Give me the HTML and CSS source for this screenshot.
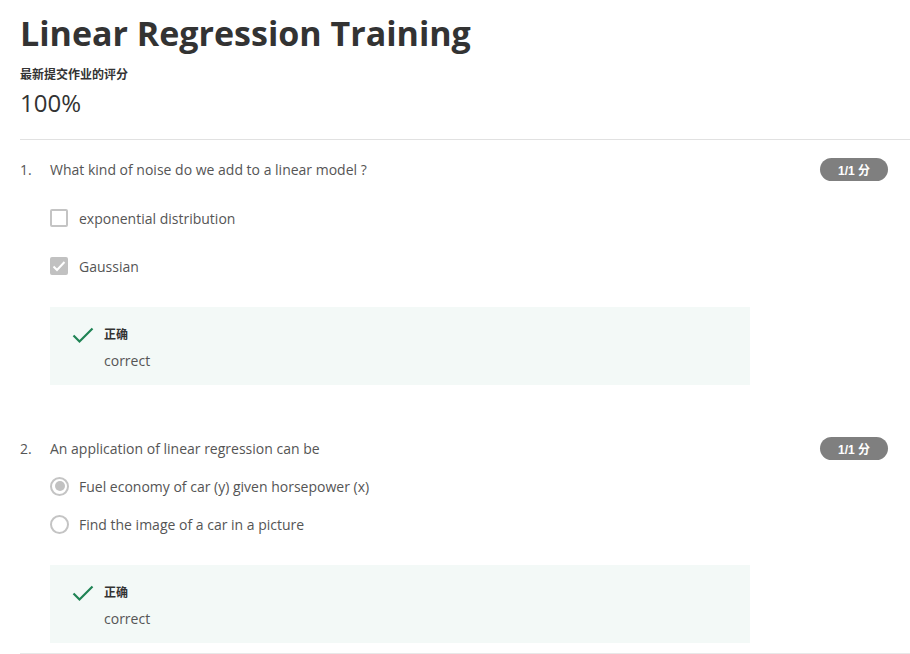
FILE: index.html
```html
<!DOCTYPE html>
<html>
<head>
<meta charset="utf-8">
<link rel="stylesheet" href="styles.css">
</head>
<body>
<div class="page">
  <header class="head">
    <h1 class="title">Linear Regression Training</h1>
    <div class="grade-label">最新提交作业的评分</div>
    <div class="grade">100%</div>
  </header>

  <section class="question">
    <div class="q-row">
      <span class="q-num">1.</span>
      <span class="q-text">What kind of noise do we add to a linear model ?</span>
      <span class="badge">1/1 分</span>
    </div>
    <div class="options checks">
      <div class="opt"><span class="box"></span><span>exponential distribution</span></div>
      <div class="opt"><span class="box on"><svg width="14" height="12" viewBox="0 0 14 12"><path d="M1.5 6.5 L5 10 L12.5 2" fill="none" stroke="#fff" stroke-width="2"/></svg></span><span>Gaussian</span></div>
    </div>
    <div class="feedback">
      <svg class="tick" width="22" height="17" viewBox="0 0 22 17"><path d="M1.5 8.5 L7.5 14.5 L20.5 1.5" fill="none" stroke="#1f8354" stroke-width="2.2"/></svg>
      <div class="fb-body">
        <div class="fb-title">正确</div>
        <div class="fb-text">correct</div>
      </div>
    </div>
  </section>

  <section class="question q2">
    <div class="q-row">
      <span class="q-num">2.</span>
      <span class="q-text">An application of linear regression can be</span>
      <span class="badge">1/1 分</span>
    </div>
    <div class="options radios">
      <div class="opt"><span class="radio on"></span><span>Fuel economy of car (y) given horsepower (x)</span></div>
      <div class="opt"><span class="radio"></span><span>Find the image of a car in a picture</span></div>
    </div>
    <div class="feedback">
      <svg class="tick" width="22" height="17" viewBox="0 0 22 17"><path d="M1.5 8.5 L7.5 14.5 L20.5 1.5" fill="none" stroke="#1f8354" stroke-width="2.2"/></svg>
      <div class="fb-body">
        <div class="fb-title">正确</div>
        <div class="fb-text">correct</div>
      </div>
    </div>
  </section>
</div>
</body>
</html>
```

FILE: styles.css
```css
html, body {
  margin: 0;
  padding: 0;
  background: #fff;
}
body {
  font-family: "Open Sans", "Noto Sans CJK SC", sans-serif;
  color: #555;
}
.page {
  padding-left: 20px;
}
.head {
  padding-top: 10px;
  border-bottom: 1px solid #e1e1e1;
  padding-bottom: 20px;
}
.title {
  margin: 0;
  font-size: 34px;
  line-height: 46px;
  font-weight: 700;
  color: #333;
}
.grade-label {
  margin-top: 10px;
  font-size: 12px;
  line-height: 18px;
  font-weight: 700;
  color: #333;
}
.grade {
  margin-top: 3px;
  font-size: 24px;
  line-height: 32px;
  font-weight: 400;
  color: #333;
}
.question {
  padding-top: 17px;
}
.q2 {
  padding-top: 51px;
  border-bottom: 1px solid #e8e8e8;
  padding-bottom: 10px;
}
.q-row {
  display: flex;
  align-items: center;
  height: 24px;
  font-size: 14px;
  padding-right: 22px;
}
.q-num {
  width: 30px;
  flex: none;
}
.q-text {
  flex: 1;
}
.badge {
  flex: none;
  width: 68px;
  height: 23px;
  border-radius: 12px;
  background: #7f7f7f;
  color: #fff;
  font-family: "Liberation Sans", "Noto Sans CJK SC", sans-serif;
  font-size: 12px;
  font-weight: 700;
  display: flex;
  align-items: center;
  justify-content: center;
}
.options {
  padding-left: 30px;
  display: flex;
  flex-direction: column;
  font-size: 14px;
}
.checks {
  margin-top: 27px;
  gap: 28px;
}
.checks .opt {
  gap: 11px;
}
.radios {
  margin-top: 16px;
  gap: 18px;
}
.opt {
  display: flex;
  align-items: center;
  height: 20px;
  gap: 10px;
}
.box {
  width: 18px;
  height: 18px;
  box-sizing: border-box;
  border: 2px solid #c4c4c4;
  border-radius: 2px;
  display: flex;
  align-items: center;
  justify-content: center;
}
.box.on {
  background: #c1c1c1;
  border-color: #c1c1c1;
}
.radio {
  width: 19px;
  height: 19px;
  box-sizing: border-box;
  border: 2px solid #c4c4c4;
  border-radius: 50%;
  display: flex;
  align-items: center;
  justify-content: center;
}
.radio.on::after {
  content: "";
  width: 10px;
  height: 10px;
  border-radius: 50%;
  background: #c1c1c1;
}
.feedback {
  margin-top: 31px;
  margin-left: 30px;
  width: 700px;
  background: #f3f9f7;
  box-sizing: border-box;
  padding: 19px 0 14px 22px;
  display: flex;
  gap: 10px;
}
.tick {
  flex: none;
  margin-top: 1px;
}
.fb-title {
  font-size: 12px;
  line-height: 18px;
  font-weight: 700;
  color: #333;
}
.fb-text {
  margin-top: 7px;
  font-size: 14px;
  line-height: 20px;
  color: #555;
}
```
